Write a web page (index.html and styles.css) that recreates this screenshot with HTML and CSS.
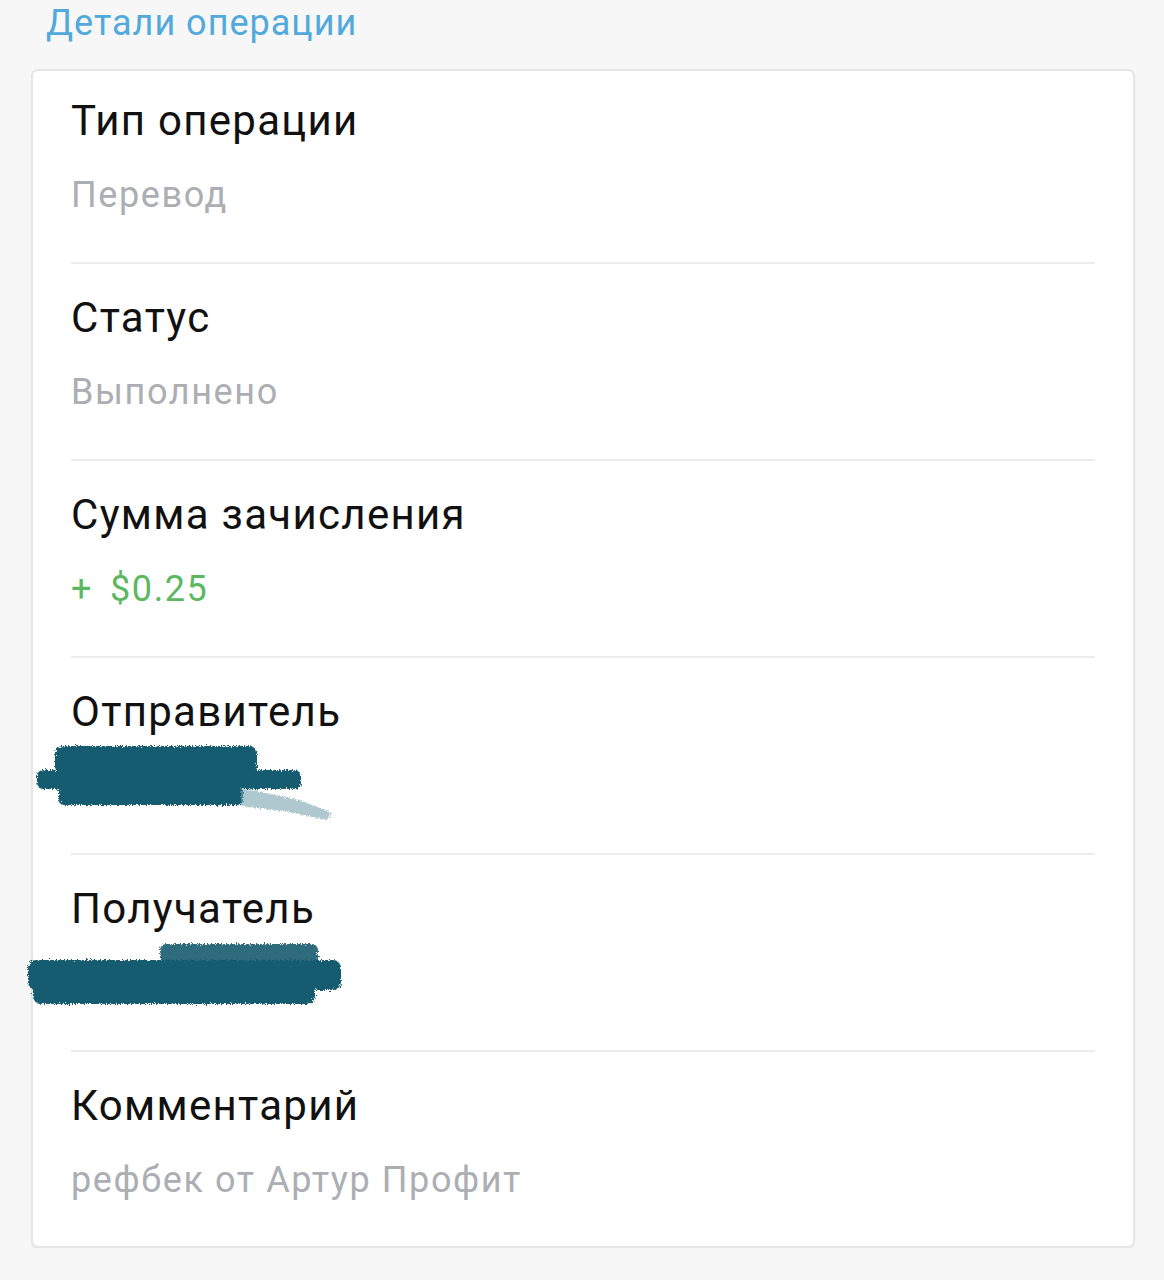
FILE: index.html
```html
<!DOCTYPE html>
<html lang="ru">
<head>
    <meta charset="UTF-8">
    <meta name="viewport" content="width=device-width, initial-scale=1.0">
    <title>Детали операции</title>
    <link rel="stylesheet" href="styles.css">
</head>
<body>
    <h2 class="title">Детали операции</h2>
    <div class="card">
        <div class="row">
            <div class="label">Тип операции</div>
            <div class="value">Перевод</div>
        </div>
        <div class="row">
            <div class="label">Статус</div>
            <div class="value">Выполнено</div>
        </div>
        <div class="row">
            <div class="label">Сумма зачисления</div>
            <div class="value amount"><span class="sign">+</span>$0.25</div>
        </div>
        <div class="row">
            <div class="label">Отправитель</div>
            <div class="value hidden">
                <!-- закрашено маркером -->
                <svg class="mark mark-sender" viewBox="36 742 298 80" width="298" height="80">
                    <defs>
                        <filter id="rough" x="-5%" y="-20%" width="110%" height="140%">
                            <feTurbulence type="fractalNoise" baseFrequency="0.8" numOctaves="3" result="n"/>
                            <feDisplacementMap in="SourceGraphic" in2="n" scale="6"/>
                        </filter>
                    </defs>
                    <g filter="url(#rough)" fill="#175b6f">
                        <rect x="56" y="746" width="202" height="28" rx="8"/>
                        <rect x="38" y="770" width="264" height="19" rx="6"/>
                        <rect x="60" y="786" width="184" height="19" rx="5"/>
                        <path d="M242 788 L300 800 L332 812 L328 820 L290 812 L242 806 Z" fill="#7aa2ae" opacity="0.6"/>
                    </g>
                </svg>
            </div>
        </div>
        <div class="row">
            <div class="label">Получатель</div>
            <div class="value hidden">
                <svg class="mark mark-receiver" viewBox="28 940 316 66" width="316" height="66">
                    <g filter="url(#rough)" fill="#175b6f">
                        <rect x="161" y="944" width="158" height="20" rx="6" opacity="0.9"/>
                        <rect x="29" y="960" width="313" height="30" rx="8"/>
                        <rect x="34" y="978" width="282" height="26" rx="8"/>
                    </g>
                </svg>
            </div>
        </div>
        <div class="row">
            <div class="label">Комментарий</div>
            <div class="value">рефбек от Артур Профит</div>
        </div>
    </div>
</body>
</html>
```

FILE: styles.css
```css
body {
    margin: 0;
    background-color: #f7f7f7;
    font-family: Roboto, "Noto Sans", sans-serif;
}
.title {
    margin: 2px 0 0 46px;
    font-size: 36px;
    font-weight: 400;
    line-height: 42px;
    letter-spacing: 1px;
    color: #52a9dc;
}
.card {
    margin: 25px 29px 0 31px;
    background-color: #fff;
    border: 2px solid #e6e6e6;
    border-radius: 7px;
    box-shadow: 0 1px 2px rgba(0, 0, 0, 0.06);
    padding: 0 38px;
}
.row {
    padding: 29px 0 46px;
    border-bottom: 2px solid #ececec;
}
.row:first-child {
    padding-top: 25px;
}
.row:last-child {
    border-bottom: none;
    padding-bottom: 45px;
}
.label {
    font-size: 42px;
    line-height: 49px;
    letter-spacing: 1.3px;
    color: #111;
}
.value {
    margin-top: 29px;
    font-size: 36px;
    line-height: 42px;
    height: 42px;
    letter-spacing: 1.6px;
    color: #abaeb3;
}
.amount {
    color: #5cb85f;
}
.sign {
    margin-right: 17px;
}
.hidden {
    position: relative;
}
.mark {
    position: absolute;
}
.mark-sender {
    left: -36px;
    top: -23px;
}
.mark-receiver {
    left: -44px;
    top: -22px;
}
```
